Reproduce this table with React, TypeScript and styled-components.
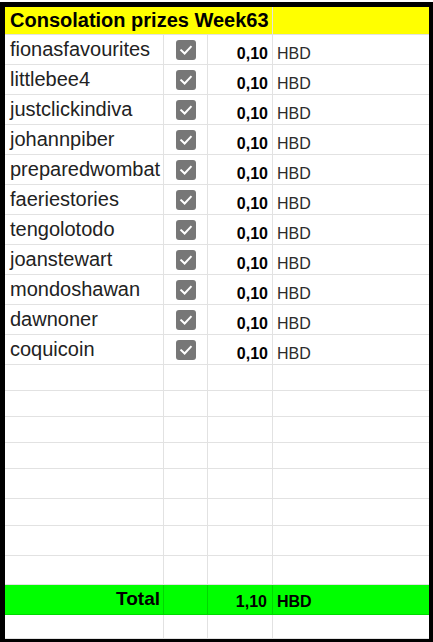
import React from "react";
import styled, { createGlobalStyle } from "styled-components";

const Global = createGlobalStyle`
  html, body { margin: 0; padding: 0; background: #ffffff; }
  body { font-family: "Liberation Sans", Arial, sans-serif; }
`;

const Page = styled.div`
  width: 433px;
  height: 642px;
  padding-top: 2px;
  box-sizing: border-box;
  background: #ffffff;
`;

const Frame = styled.div`
  width: 433px;
  height: 640px;
  box-sizing: border-box;
  border-style: solid;
  border-color: #000;
  border-width: 5px 4px 3px 5px;
  background: #fff;
  overflow: hidden;
`;

const Sheet = styled.div`
  display: grid;
  grid-template-columns: 159px 44px 65px 156px;
`;

type CellProps = { $h: number; $bg?: string; $line?: string; $span?: number; $justify?: string; $pad?: string; $noRight?: boolean };

const Cell = styled.div<CellProps>`
  box-sizing: border-box;
  height: ${(p) => p.$h}px;
  background: ${(p) => p.$bg || "transparent"};
  border-bottom: 1px solid ${(p) => p.$line || "#e2e2e2"};
  border-right: ${(p) => (p.$noRight ? "none" : `1px solid ${p.$line || "#e2e2e2"}`)};
  grid-column: span ${(p) => p.$span || 1};
  display: flex;
  align-items: flex-end;
  justify-content: ${(p) => p.$justify || "flex-start"};
  padding: ${(p) => p.$pad || "0"};
  white-space: nowrap;
  overflow: visible;
  min-width: 0;
`;

const HeaderText = styled.span`
  font-weight: 700;
  font-size: 20px;
  line-height: 20px;
  color: #000;
`;

const Name = styled.span`
  font-size: 20px;
  line-height: 20px;
  color: #222;
`;

const Amount = styled.span`
  font-size: 16px;
  line-height: 16px;
  font-weight: 700;
  color: #000;
`;

const Unit = styled.span<{ $bold?: boolean }>`
  font-size: 16px;
  line-height: 16px;
  font-weight: ${(p) => (p.$bold ? 700 : 400)};
  color: ${(p) => (p.$bold ? "#000" : "#2b2b2b")};
`;

const TotalLabel = styled.span`
  font-size: 19px;
  line-height: 19px;
  font-weight: 700;
  color: #000;
`;

const Box = styled.span`
  width: 20px;
  height: 20px;
  border-radius: 3px;
  background: #777777;
  display: flex;
  align-items: center;
  justify-content: center;
  margin-bottom: 4px;
`;

const Check = () => (
  <Box>
    <svg width="16" height="16" viewBox="0 0 16 16">
      <path d="M3.2 8.3 L6.6 11.5 L12.8 4.8" fill="none" stroke="#fff" strokeWidth="2" strokeLinecap="square" />
    </svg>
  </Box>
);

const names = [
  "fionasfavourites",
  "littlebee4",
  "justclickindiva",
  "johannpiber",
  "preparedwombat",
  "faeriestories",
  "tengolotodo",
  "joanstewart",
  "mondoshawan",
  "dawnoner",
  "coquicoin",
];

const emptyHeights = [26, 26, 26, 26, 30, 27, 30, 29];

const GREEN = "#00ff00";
const GREEN_LINE = "#00d800";

export default function App() {
  return (
    <>
      <Global />
      <Page>
        <Frame>
          <Sheet>
            <Cell $h={28} $bg="#ffff00" $span={3} $pad="0 0 4px 5px">
              <HeaderText>Consolation prizes Week63</HeaderText>
            </Cell>
            <Cell $h={28} $bg="#ffff00" $noRight />

            {names.map((n) => (
              <React.Fragment key={n}>
                <Cell $h={30} $pad="0 0 5px 5px">
                  <Name>{n}</Name>
                </Cell>
                <Cell $h={30} $justify="center">
                  <Check />
                </Cell>
                <Cell $h={30} $justify="flex-end" $pad="0 4px 2px 0">
                  <Amount>0,10</Amount>
                </Cell>
                <Cell $h={30} $pad="0 0 2px 4px" $noRight>
                  <Unit>HBD</Unit>
                </Cell>
              </React.Fragment>
            ))}

            {emptyHeights.map((h, i) => (
              <React.Fragment key={"e" + i}>
                <Cell $h={h} />
                <Cell $h={h} />
                <Cell $h={h} />
                <Cell $h={h} $noRight />
              </React.Fragment>
            ))}

            <Cell $h={30} $bg={GREEN} $line={GREEN_LINE} $justify="flex-end" $pad="0 3px 6px 0">
              <TotalLabel>Total</TotalLabel>
            </Cell>
            <Cell $h={30} $bg={GREEN} $line={GREEN_LINE} />
            <Cell $h={30} $bg={GREEN} $line={GREEN_LINE} $justify="flex-end" $pad="0 5px 4px 0">
              <Amount>1,10</Amount>
            </Cell>
            <Cell $h={30} $bg={GREEN} $line={GREEN_LINE} $pad="0 0 4px 4px" $noRight>
              <Unit $bold>HBD</Unit>
            </Cell>

            <Cell $h={24} />
            <Cell $h={24} />
            <Cell $h={24} />
            <Cell $h={24} $noRight />
          </Sheet>
        </Frame>
      </Page>
    </>
  );
}
